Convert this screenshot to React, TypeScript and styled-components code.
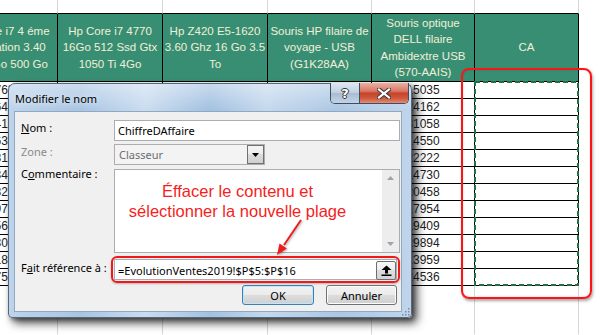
import styled, { createGlobalStyle } from 'styled-components';

const GlobalStyle = createGlobalStyle`
  html, body {
    margin: 0;
    padding: 0;
    background: #fff;
  }
  body {
    width: 602px;
    height: 335px;
    overflow: hidden;
  }
`;

const headers: string[][] = [
  ['Hp Core i7 4 éme', 'Génération 3.40', 'Ghz 8Go 500 Go'],
  ['Hp Core i7 4770', '16Go 512 Ssd Gtx', '1050 Ti 4Go'],
  ['Hp Z420 E5-1620', '3.60 Ghz 16 Go 3.5', 'To'],
  ['Souris HP filaire de', 'voyage - USB', '(G1K28AA)'],
  ['Souris optique', 'DELL filaire', 'Ambidextre USB', '(570-AAIS)'],
  ['CA'],
];

const rows: (number | null)[][] = [
  [27635, 18420, 9250, 31400, 15035, null],
  [16428, 22105, 11870, 28050, 24162, null],
  [24184, 17560, 10435, 19870, 31058, null],
  [16326, 25900, 12210, 27440, 14550, null],
  [38150, 14380, 8975, 22315, 22222, null],
  [33402, 19645, 13520, 30185, 14730, null],
  [58210, 21470, 9840, 25630, 20458, null],
  [29718, 16935, 11260, 18745, 17954, null],
  [35640, 23180, 12975, 29510, 19409, null],
  [43027, 15725, 10580, 24360, 29894, null],
  [31894, 20310, 9415, 26895, 13959, null],
  [47520, 18865, 12040, 21730, 24536, null],
];

const Page = styled.div`
  position: relative;
  width: 602px;
  height: 335px;
  overflow: hidden;
  background: #fff;
  font-family: 'Noto Sans', sans-serif;
`;

const Sheet = styled.div`
  display: grid;
  grid-template-columns: 106px 105px 105px 104px 103px 104px 1fr;
  grid-template-rows: 14px 68px repeat(12, 17px) 1fr;
  width: 650px;
  height: 100%;
  margin-left: -48px;
  font-family: 'Liberation Sans', Arial, sans-serif;
`;

const BlankCell = styled.div<{ $tableTop?: boolean }>`
  box-sizing: border-box;
  border-right: 1px solid #d6d6d6;
  border-bottom: 1px solid ${(p) => (p.$tableTop ? '#000' : 'transparent')};
`;

const OutsideCell = styled.div`
  background: #fff;
`;

const HeadCell = styled.div`
  box-sizing: border-box;
  display: flex;
  flex-direction: column;
  align-items: center;
  justify-content: center;
  overflow: hidden;
  background: #388e73;
  color: #f2efd8;
  border-right: 1px solid #000;
  border-bottom: 1px solid #000;
  font-size: 11.5px;
  line-height: 16.5px;
  white-space: nowrap;
`;

const DataCell = styled.div`
  box-sizing: border-box;
  display: flex;
  align-items: center;
  justify-content: center;
  border-right: 1px solid #000;
  border-bottom: 1px solid #000;
  font-size: 12px;
  color: #1c1c24;
`;

const Dialog = styled.div`
  position: absolute;
  left: 8px;
  top: 83px;
  z-index: 2;
  width: 404px;
  height: 235px;
  box-sizing: border-box;
  display: flex;
  flex-direction: column;
  border: 1px solid #56677d;
  border-radius: 7px 7px 4px 4px;
  background:
    linear-gradient(180deg, rgba(255, 255, 255, 0.4), rgba(255, 255, 255, 0) 26px),
    linear-gradient(90deg, #bdd4ec 0%, #a8c5e3 18%, #cadcef 34%, #a2c1e1 50%, #c4d8ed 64%, #abc7e4 82%, #c0d5eb 100%);
  box-shadow: 5px 5px 10px rgba(0, 0, 0, 0.7), 2px 2px 4px rgba(0, 0, 0, 0.35);
`;

const TitleBar = styled.div`
  display: flex;
  justify-content: space-between;
  align-items: flex-start;
  height: 27px;
  padding-left: 6px;
`;

const Title = styled.div`
  padding-top: 7px;
  font-size: 11px;
  line-height: 16px;
  color: #000;
  text-shadow: 0 0 6px rgba(255, 255, 255, 0.95);
`;

const CaptionButtons = styled.div`
  display: flex;
  margin-top: -1px;
  margin-right: 2px;
  border: 1px solid #3f4e63;
  border-top: none;
  border-radius: 0 0 5px 5px;
  overflow: hidden;
`;

const HelpButton = styled.div`
  display: flex;
  align-items: center;
  justify-content: center;
  width: 28px;
  height: 20px;
  border-right: 1px solid #3f4e63;
  background: linear-gradient(180deg, #dde7f2 0%, #c1d0e1 48%, #a9bcd2 52%, #c3d3e5 100%);
  color: #fff;
  font-family: 'DejaVu Sans', sans-serif;
  font-weight: bold;
  font-size: 13px;
  text-shadow: 1px 0 0 #333, -1px 0 0 #333, 0 1px 0 #333, 0 -1px 0 #333;
`;

const CloseButton = styled.div`
  display: flex;
  align-items: center;
  justify-content: center;
  width: 48px;
  height: 20px;
  background: linear-gradient(180deg, #eab0a3 0%, #d97865 40%, #c6432b 52%, #d15a3f 78%, #e58d76 100%);
`;

const Client = styled.div`
  position: relative;
  flex: 1;
  margin: 0 9px 5px 5px;
  padding: 8px 1px 0 6px;
  background: #f0f0f0;
  border: 1px solid #93a7bf;
`;

const Row = styled.div<{ $gap?: number }>`
  display: grid;
  grid-template-columns: 93px 286px;
  margin-top: ${(p) => p.$gap ?? 0}px;
`;

const Label = styled.div<{ $disabled?: boolean; $shift?: number }>`
  margin-top: ${(p) => p.$shift ?? 0}px;
  font-size: 11px;
  line-height: 16px;
  color: ${(p) => (p.$disabled ? '#8a8a8a' : '#000')};
  white-space: nowrap;
`;

const TextBox = styled.div<{ $padTop?: number }>`
  box-sizing: border-box;
  display: flex;
  align-items: flex-start;
  height: 21px;
  padding: ${(p) => p.$padTop ?? 0}px 0 0 3px;
  background: #fff;
  border: 1px solid #abadb3;
  font-size: 11px;
  line-height: 19px;
  color: #000;
  white-space: nowrap;
`;

const Combo = styled.div`
  box-sizing: border-box;
  display: flex;
  justify-content: space-between;
  align-items: center;
  width: 151px;
  height: 21px;
  padding-left: 4px;
  background: #f3f3f3;
  border: 1px solid #adadad;
  font-size: 11px;
  color: #6d6d6d;
`;

const ComboArrow = styled.div`
  box-sizing: border-box;
  display: flex;
  align-items: center;
  justify-content: center;
  width: 17px;
  height: 19px;
  border: 1px solid #707070;
  background: linear-gradient(180deg, #f4f4f4 0%, #ebebeb 50%, #dcdcdc 50%, #d0d0d0 100%);
`;

const Memo = styled.div`
  box-sizing: border-box;
  display: flex;
  height: 84px;
  background: #fff;
  border: 1px solid #abadb3;
`;

const MemoText = styled.div`
  flex: 1;
  padding: 11px 22px 0 0;
  text-align: center;
  font-family: 'Liberation Sans', Arial, sans-serif;
  font-size: 16.5px;
  line-height: 20px;
  color: #f41e1e;
`;

const ScrollBar = styled.div`
  display: flex;
  flex-direction: column;
  justify-content: space-between;
  align-items: center;
  width: 17px;
  padding: 6px 0;
  background: #ededed;
`;

const Highlight = styled.div`
  box-sizing: border-box;
  width: 289px;
  height: 27px;
  margin-left: -3px;
  padding: 1px;
  border: 2px solid #f01818;
  border-radius: 6px;
  box-shadow: 0 1px 2px rgba(0, 0, 0, 0.25);
`;

const RefBox = styled(TextBox)`
  justify-content: space-between;
  width: 283px;
  padding-right: 0;
`;

const PickButton = styled.div`
  box-sizing: border-box;
  display: flex;
  align-items: center;
  justify-content: center;
  width: 20px;
  height: 19px;
  border: 1px solid #6f6f6f;
  border-radius: 2px;
  background: linear-gradient(180deg, #f7f7f7 0%, #ececec 50%, #dedede 50%, #d3d3d3 100%);
`;

const ButtonRow = styled.div`
  display: flex;
  justify-content: flex-end;
  gap: 12px;
  margin-top: 2px;
  padding-right: 3px;
`;

const Button = styled.div<{ $primary?: boolean }>`
  box-sizing: border-box;
  display: flex;
  align-items: center;
  justify-content: center;
  width: ${(p) => (p.$primary ? 72 : 71)}px;
  height: 20px;
  border: 1px solid ${(p) => (p.$primary ? '#3c7fb1' : '#707070')};
  border-radius: 3px;
  background: linear-gradient(180deg, #f2f2f2 0%, #ebebeb 50%, #dddddd 50%, #cfcfcf 100%);
  box-shadow: ${(p) => (p.$primary ? 'inset 0 0 0 1px #bfe6fb' : 'inset 0 0 0 1px #fcfcfc')};
  font-size: 11px;
  color: #000;
`;

const Grip = styled.svg`
  position: absolute;
  right: 1px;
  bottom: 1px;
`;

const RedFrame = styled.div`
  position: absolute;
  left: 461px;
  top: 68px;
  width: 131px;
  height: 231px;
  box-sizing: border-box;
  border: 2px solid #ff1414;
  border-radius: 8px;
  box-shadow: 1px 2px 3px rgba(0, 0, 0, 0.35), inset 0 0 2px rgba(0, 0, 0, 0.2);
`;

const Marquee = styled.svg`
  position: absolute;
  left: 474px;
  top: 81px;
`;

const Arrow = styled.svg`
  position: absolute;
  left: 270px;
  top: 214px;
  z-index: 3;
  filter: drop-shadow(1px 1px 1px rgba(0, 0, 0, 0.3));
`;

export default function App() {
  return (
    <Page>
      <GlobalStyle />
      <Sheet>
        {headers.map((_, i) => (
          <BlankCell key={`t${i}`} $tableTop />
        ))}
        <OutsideCell />

        {headers.map((lines, i) => (
          <HeadCell key={`h${i}`}>
            {lines.map((line) => (
              <span key={line}>{line}</span>
            ))}
          </HeadCell>
        ))}
        <OutsideCell />

        {rows.map((row, r) => [
          ...row.map((v, c) => <DataCell key={`d${r}-${c}`}>{v ?? ''}</DataCell>),
          <OutsideCell key={`o${r}`} />,
        ])}

        {headers.map((_, i) => (
          <BlankCell key={`b${i}`} />
        ))}
        <OutsideCell />
      </Sheet>

      <Marquee width="105" height="205">
        <rect x="1" y="1" width="103" height="203" fill="none" stroke="#1e7145" strokeWidth="2" strokeDasharray="5 3" />
      </Marquee>
      <RedFrame />

      <Dialog>
        <TitleBar>
          <Title>Modifier le nom</Title>
          <CaptionButtons>
            <HelpButton>?</HelpButton>
            <CloseButton>
              <svg width="14" height="11" viewBox="0 0 14 11">
                <path d="M2 1.5 L12 9.5 M12 1.5 L2 9.5" stroke="#3b3b3b" strokeWidth="4.2" strokeLinecap="square" />
                <path d="M2 1.5 L12 9.5 M12 1.5 L2 9.5" stroke="#fff" strokeWidth="2.2" strokeLinecap="square" />
              </svg>
            </CloseButton>
          </CaptionButtons>
        </TitleBar>

        <Client>
          <Row>
            <Label>
              <u>N</u>om :
            </Label>
            <TextBox>ChiffreDAffaire</TextBox>
          </Row>
          <Row $gap={3}>
            <Label $disabled>Zone :</Label>
            <Combo>
              Classeur
              <ComboArrow>
                <svg width="7" height="4" viewBox="0 0 7 4">
                  <path d="M0 0 H7 L3.5 4 Z" fill="#000" />
                </svg>
              </ComboArrow>
            </Combo>
          </Row>
          <Row $gap={4}>
            <Label $shift={-3}>
              C<u>o</u>mmentaire :
            </Label>
            <Memo>
              <MemoText>
                Éffacer le contenu et
                <br />
                sélectionner la nouvelle plage
              </MemoText>
              <ScrollBar>
                <svg width="7" height="4" viewBox="0 0 7 4">
                  <path d="M0 4 H7 L3.5 0 Z" fill="#a3a3a3" />
                </svg>
                <svg width="7" height="4" viewBox="0 0 7 4">
                  <path d="M0 0 H7 L3.5 4 Z" fill="#a3a3a3" />
                </svg>
              </ScrollBar>
            </Memo>
          </Row>
          <Row $gap={3}>
            <Label $shift={4}>
              F<u>a</u>it référence à :
            </Label>
            <Highlight>
              <RefBox $padTop={1}>
                =EvolutionVentes2019!$P$5:$P$16
                <PickButton>
                  <svg width="11" height="11" viewBox="0 0 11 11">
                    <path d="M5.5 0.5 L10.5 5 H7 V8.5 H4 V5 H0.5 Z" fill="#000" />
                    <rect x="0.5" y="9.5" width="10" height="1.5" fill="#000" />
                  </svg>
                </PickButton>
              </RefBox>
            </Highlight>
          </Row>
          <ButtonRow>
            <Button $primary>OK</Button>
            <Button>Annuler</Button>
          </ButtonRow>
        </Client>

        <Grip width="9" height="9" viewBox="0 0 9 9">
          <g fill="#7d8b9b">
            <rect x="7" y="1" width="1.5" height="1.5" />
            <rect x="4" y="4" width="1.5" height="1.5" />
            <rect x="7" y="4" width="1.5" height="1.5" />
            <rect x="1" y="7" width="1.5" height="1.5" />
            <rect x="4" y="7" width="1.5" height="1.5" />
            <rect x="7" y="7" width="1.5" height="1.5" />
          </g>
        </Grip>
      </Dialog>

      <Arrow width="40" height="46" viewBox="0 0 40 46">
        <line x1="31" y1="6" x2="14" y2="31" stroke="#ee1c1c" strokeWidth="2" />
        <path d="M7 41 L16.9 34.4 L9.5 29.4 Z" fill="#ee1c1c" />
      </Arrow>
    </Page>
  );
}
